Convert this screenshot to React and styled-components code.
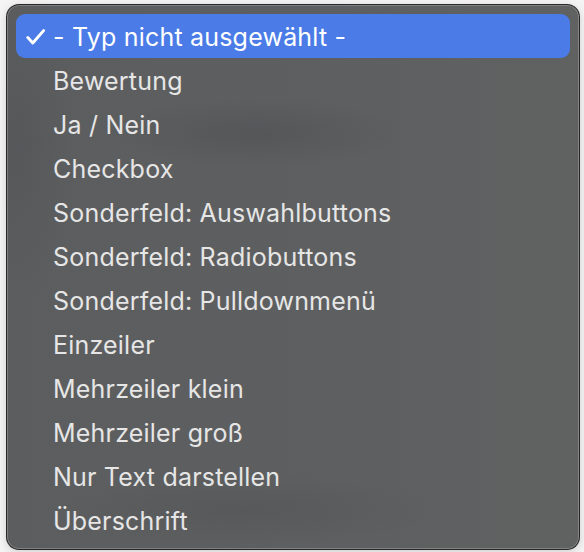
import React from 'react';
import styled, { createGlobalStyle } from 'styled-components';

const GlobalStyle = createGlobalStyle`
  html, body {
    margin: 0;
    padding: 0;
    background: #f4f4f5;
  }
  body {
    font-family: Inter, "Noto Sans", "Liberation Sans", sans-serif;
    -webkit-font-smoothing: antialiased;
  }
`;

const Page = styled.div`
  width: 584px;
  height: 552px;
  box-sizing: border-box;
  padding: 4px 4px 2px 6px;
  overflow: hidden;
`;

const Menu = styled.ul`
  list-style: none;
  margin: 0;
  box-sizing: border-box;
  width: 574px;
  height: 546px;
  padding: 9px 9px 8px 9px;
  border-radius: 13px;
  border: 1px solid rgba(20, 20, 20, 0.75);
  box-shadow: inset 0 0 0 1px rgba(255, 255, 255, 0.22), 0 2px 8px rgba(0, 0, 0, 0.15);
  background:
    radial-gradient(ellipse 150px 35px at 250px 128px, rgba(76, 80, 82, 0.55), transparent),
    radial-gradient(ellipse 190px 35px at 240px 505px, rgba(78, 80, 82, 0.4), transparent),
    radial-gradient(ellipse 60px 160px at 10px 140px, rgba(76, 80, 82, 0.4), transparent),
    linear-gradient(90deg, #5c5d5e 0%, #5e5f60 60%, #606161 100%);
  display: flex;
  flex-direction: column;
`;

const Item = styled.li`
  height: 44px;
  flex: 0 0 44px;
  display: flex;
  align-items: center;
  border-radius: 9px;
  padding-left: 10px;
  padding-top: 1px;
  box-sizing: border-box;
  font-size: 25px;
  letter-spacing: 0.2px;
  color: ${props => (props.selected ? '#ffffff' : '#e6e6e6')};
  background: ${props => (props.selected ? '#4a7be7' : 'transparent')};
`;

const Check = styled.span`
  width: 27px;
  display: flex;
  align-items: center;
`;

const CheckMark = () => (
  <svg width="20" height="16" viewBox="0 0 20 16" fill="none">
    <path d="M1.8 8.6 L6.8 14 L17.6 1.6" stroke="#ffffff" strokeWidth="2.9" strokeLinecap="round" strokeLinejoin="round" />
  </svg>
);

const options = [
  '- Typ nicht ausgewählt -',
  'Bewertung',
  'Ja / Nein',
  'Checkbox',
  'Sonderfeld: Auswahlbuttons',
  'Sonderfeld: Radiobuttons',
  'Sonderfeld: Pulldownmenü',
  'Einzeiler',
  'Mehrzeiler klein',
  'Mehrzeiler groß',
  'Nur Text darstellen',
  'Überschrift',
];

const App = () => {
  const selected = 0;
  return (
    <Page>
      <GlobalStyle />
      <Menu>
        {options.map((label, i) => (
          <Item key={label} selected={i === selected}>
            <Check>{i === selected && <CheckMark />}</Check>
            {label}
          </Item>
        ))}
      </Menu>
    </Page>
  );
};

export default App;
